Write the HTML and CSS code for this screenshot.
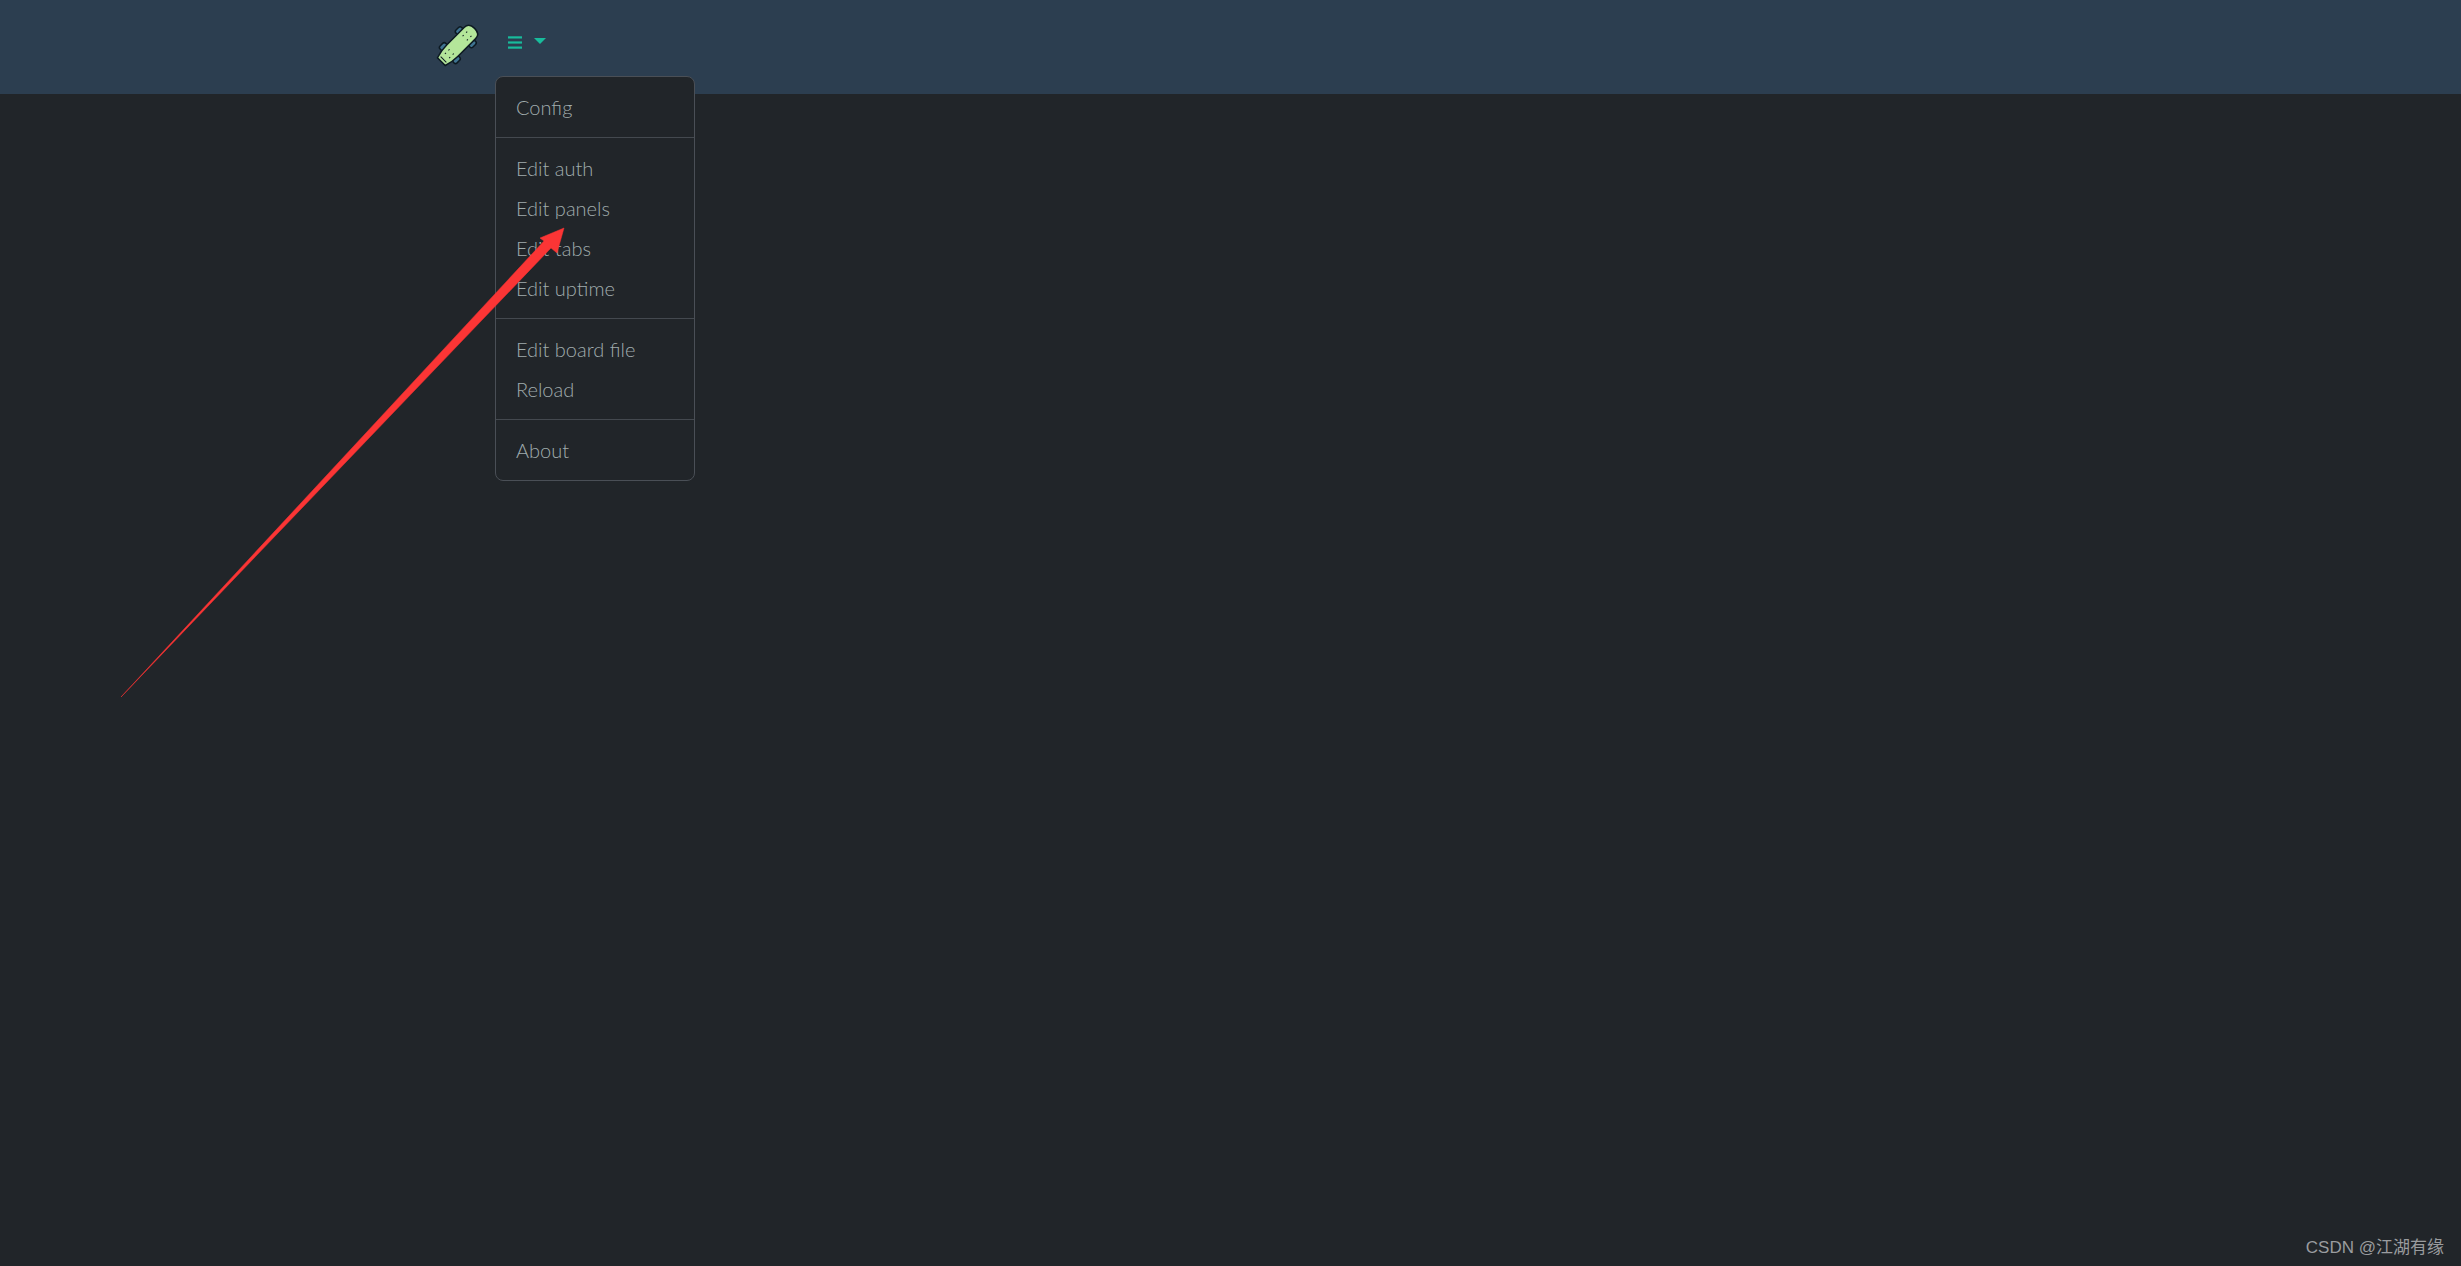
FILE: index.html
```html
<!DOCTYPE html>
<html lang="en">
<head>
    <meta charset="UTF-8">
    <title>Board</title>
    <link rel="stylesheet" href="styles.css">
</head>
<body>
    <nav class="navbar">
        <svg class="logo" width="44" height="44" viewBox="0 0 44 44">
            <g transform="rotate(45 22 22)" stroke="#0d1a22" stroke-width="1.5">
                <rect x="10" y="7" width="5" height="8" rx="2.2" fill="#3f7391"/>
                <rect x="29" y="7" width="5" height="8" rx="2.2" fill="#3f7391"/>
                <rect x="10" y="29.500" width="5" height="8" rx="2.2" fill="#3f7391"/>
                <rect x="29" y="29.500" width="5" height="8" rx="2.200" fill="#3f7391"/>
                <path d="M22 -1.500C27 -1.500 30 1 30 5V30C30 36 29 41 27.500 45.500H16.500C15 41 14 36 14 30V5C14 1 17 -1.500 22 -1.500Z" fill="#b4e69a"/>
                <path d="M18 42.500H26" stroke-width="1"/>
                <path d="M19 6V7.500M25 6V7.500M19 11V12.500M25 11V12.500M19 31V32.500M25 31V32.500M19 36V37.500M25 36V37.500" stroke-width="1" fill="none"/>
            </g>
        </svg>
        <button class="menu-toggle">
            <svg class="burger" width="14" height="13" viewBox="0 0 14 13">
                <rect y="0.300" width="14" height="2.200"/>
                <rect y="5.400" width="14" height="2.200"/>
                <rect y="10.500" width="14" height="2.200"/>
            </svg>
            <span class="caret"></span>
        </button>
    </nav>

    <div class="dropdown">
        <a>Config</a>
        <hr>
        <a>Edit auth</a>
        <a>Edit panels</a>
        <a>Edit tabs</a>
        <a>Edit uptime</a>
        <hr>
        <a>Edit board file</a>
        <a>Reload</a>
        <hr>
        <a>About</a>
    </div>

    <!-- annotation arrow -->
    <svg class="arrow" width="2461" height="1266" viewBox="0 0 2461 1266">
        <path d="M121 697L544 241L540 238L564 228L557 253L551 248Z" fill="#fb3535" stroke="#fb3535" stroke-width="0.500"/>
    </svg>

    <div class="watermark">CSDN @江湖有缘</div>
</body>
</html>
```

FILE: styles.css
```css
body {
    margin: 0;
    height: 1266px;
    overflow: hidden;
    background-color: #212529;
    font-family: 'Lato', sans-serif;
}
.navbar {
    height: 94px;
    background-color: #2c3e50;
    display: flex;
    align-items: flex-start;
    padding-left: 436px;
    box-sizing: border-box;
}
.logo {
    margin-top: 23px;
    overflow: visible;
}
.menu-toggle {
    margin: 36px 0 0 28px;
    padding: 0;
    border: none;
    background: none;
    display: flex;
    align-items: flex-start;
    gap: 12px;
}
.burger {
    fill: #18bc9c;
}
.caret {
    border-left: 6px solid transparent;
    border-right: 6px solid transparent;
    border-top: 6px solid #18bc9c;
    margin-top: 2px;
}
.dropdown {
    position: absolute;
    left: 495px;
    top: 76px;
    width: 200px;
    height: 405px;
    box-sizing: border-box;
    padding: 9.5px 0;
    background-color: #212529;
    border: 1px solid #4a4f56;
    border-radius: 8px;
}
.dropdown a {
    display: block;
    height: 40px;
    line-height: 40px;
    padding-left: 20px;
    font-size: 20px;
    font-weight: 300;
    color: #a0acad;
}
.dropdown hr {
    margin: 10px 0;
    border: none;
    border-top: 1px solid #44494f;
    height: 0;
}
.arrow {
    position: absolute;
    left: 0;
    top: 0;
    pointer-events: none;
}
.watermark {
    position: absolute;
    right: 17px;
    bottom: 8px;
    font-family: 'Liberation Sans', 'Noto Sans CJK SC', sans-serif;
    font-size: 17px;
    color: #9a9c9f;
}
```
